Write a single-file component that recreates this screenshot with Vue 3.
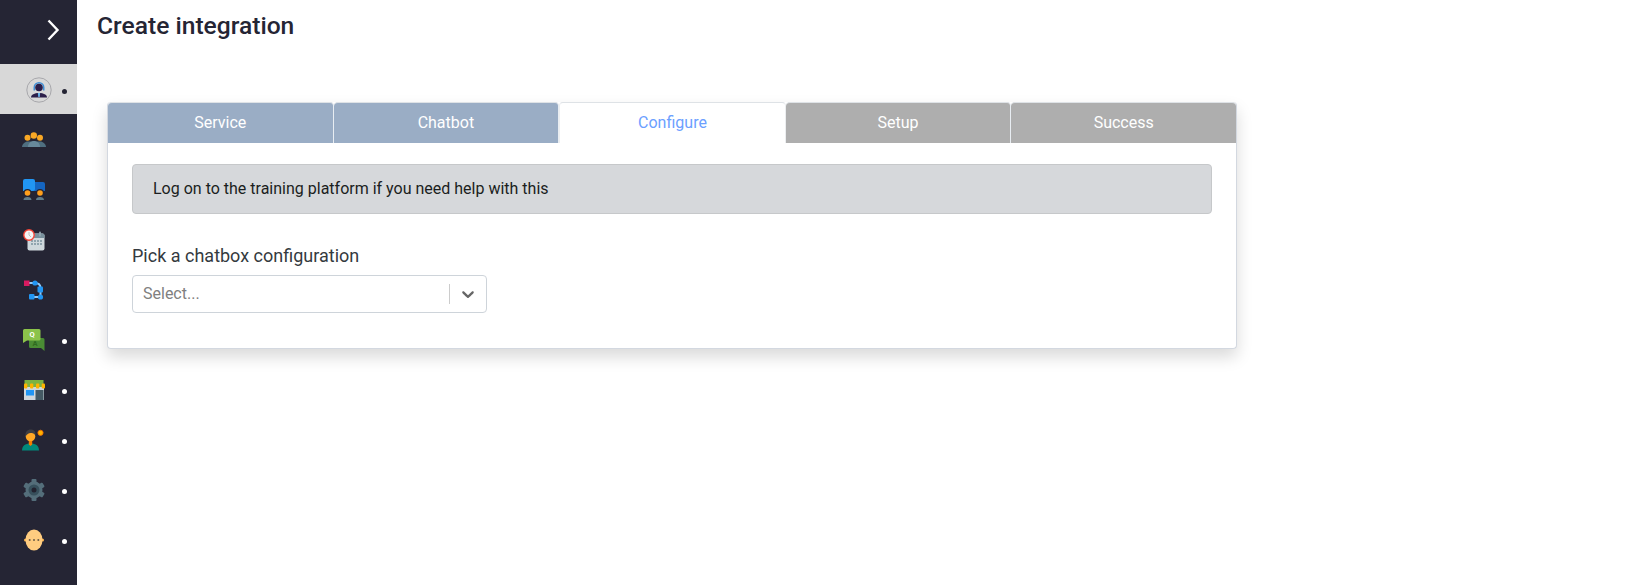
<script setup>
const tabs = [
  { label: 'Service', state: 'done' },
  { label: 'Chatbot', state: 'done' },
  { label: 'Configure', state: 'active' },
  { label: 'Setup', state: 'todo' },
  { label: 'Success', state: 'todo' }
]
const items = [
  { id: 'agent', dot: true, active: true },
  { id: 'team' },
  { id: 'folder' },
  { id: 'calendar' },
  { id: 'flow' },
  { id: 'qa', dot: true },
  { id: 'store', dot: true },
  { id: 'idea', dot: true },
  { id: 'gear', dot: true },
  { id: 'face', dot: true }
]
</script>

<template>
  <div class="page">
    <nav class="sidebar">
      <div class="toggle">
        <svg width="14" height="22" viewBox="0 0 14 22"><path d="M2.500 1.500 L11.500 11 L2.500 20.500" fill="none" stroke="#fff" stroke-width="2.400"/></svg>
      </div>
      <div v-for="item in items" :key="item.id" class="nav-item" :class="{ active: item.active }">
        <span class="nav-icon" :class="item.id">
          <svg v-if="item.id === 'agent'" width="26" height="26" viewBox="0 0 26 26">
            <circle cx="13" cy="13" r="12.200" fill="none" stroke="#9a9a9f" stroke-width=".8"/>
            <path d="M7.500 10.500a5.500 5.500 0 0 1 11 0v3h-1.500v-3a4 4 0 0 0-8 0v3h-1.500z" fill="#3f8fd6"/>
            <circle cx="13" cy="10.500" r="3.800" fill="#2c1f4a"/>
            <path d="M5 20.500c0-3 3.500-4.500 8-4.500s8 1.500 8 4.500z" fill="#2c1f4a"/>
            <path d="M11.800 16h2.400l-.5 4h-1.400z" fill="#6bb5ea"/>
          </svg>
          <svg v-else-if="item.id === 'team'" width="24" height="16" viewBox="0 0 24 16">
            <path d="M0 15c0-3 3-5.500 6-5.500h12c3 0 6 2.500 6 5.500z" fill="#4f6f80"/>
            <path d="M6 15c0-4 3-6 6-6s6 2 6 6z" fill="#67899b"/>
            <circle cx="5.500" cy="5.800" r="3" fill="#f9a825"/>
            <circle cx="18" cy="5.800" r="3" fill="#f9a825"/>
            <circle cx="11.800" cy="3.500" r="3.200" fill="#f9a825"/>
          </svg>
          <svg v-else-if="item.id === 'folder'" width="22" height="21" viewBox="0 0 22 21">
            <path d="M0 3h20a2 2 0 0 1 2 2v7H0z" fill="#1565c0"/>
            <path d="M2 0h8a2 2 0 0 1 2 2v8a2 2 0 0 1-2 2H0V2a2 2 0 0 1 2-2z" fill="#2196f3"/>
            <circle cx="4.500" cy="14" r="4" fill="#252534"/>
            <circle cx="17" cy="14" r="4" fill="#252534"/>
            <circle cx="4.500" cy="14" r="2.800" fill="#ff9f1c"/>
            <circle cx="17" cy="14" r="2.800" fill="#ff9f1c"/>
            <path d="M.500 21c0-2 1.500-3 4-3s4 1 4 3zM13 21c0-2 1.500-3 4-3s4 1 4 3z" fill="#607d8b"/>
          </svg>
          <svg v-else-if="item.id === 'calendar'" width="22" height="22" viewBox="0 0 22 22">
            <rect x="4.500" y="4.500" width="17" height="17" rx="2" fill="#cfd8dc"/>
            <path d="M4.500 6.500a2 2 0 0 1 2-2h13a2 2 0 0 1 2 2V9h-17z" fill="#78909c"/>
            <rect x="16" y="2.500" width="2" height="5" rx="1" fill="#90a4ae"/>
            <g fill="#90a4ae"><rect x="8" y="11" width="2" height="2"/><rect x="11" y="11" width="2" height="2"/><rect x="14" y="11" width="2" height="2"/><rect x="17" y="11" width="2" height="2"/><rect x="8" y="14" width="2" height="2"/><rect x="11" y="14" width="2" height="2"/><rect x="14" y="14" width="2" height="2"/><rect x="17" y="14" width="2" height="2"/></g>
            <circle cx="6" cy="6" r="5.200" fill="#f5f5f5" stroke="#f44336" stroke-width="1.400"/>
            <path d="M6 3v3l2 2" fill="none" stroke="#bbb" stroke-width=".9"/>
          </svg>
          <svg v-else-if="item.id === 'flow'" width="20" height="20" viewBox="0 0 20 20">
            <path d="M5 3h6c4 0 5.500 2 5.500 5v9H7" fill="none" stroke="#90caf9" stroke-width="2"/>
            <rect x="0" y=".5" width="5.500" height="5.500" fill="#d81b60"/>
            <circle cx="11" cy="3" r="2.600" fill="#2196f3"/>
            <rect x="13.500" y="6.500" width="5.500" height="6" rx="1" fill="#2196f3"/>
            <rect x="5" y="14" width="5.500" height="5.500" rx="1" fill="#2196f3"/>
            <circle cx="16.500" cy="17" r="2.600" fill="#2196f3"/>
          </svg>
          <svg v-else-if="item.id === 'qa'" width="22" height="22" viewBox="0 0 22 22">
            <path d="M6 9h14a1.500 1.500 0 0 1 1.500 1.500V22l-3.500-3H7.500A1.500 1.500 0 0 1 6 17.500z" fill="#4a8c34"/>
            <path d="M1.500 0h14.500a1.500 1.500 0 0 1 1.500 1.500V10a1.500 1.500 0 0 1-1.500 1.500H4L0 14V1.500A1.500 1.500 0 0 1 1.500 0z" fill="#8bc34a"/>
            <text x="9" y="8.200" class="qa-q">Q</text>
            <text x="12" y="16.500" class="qa-a">A</text>
          </svg>
          <svg v-else-if="item.id === 'store'" width="22" height="20" viewBox="0 0 22 20">
            <rect x="1" y="7" width="20" height="13" fill="#cfd8dc"/>
            <rect x="3" y="10" width="8" height="5.500" fill="#2196f3"/>
            <rect x="12.500" y="10" width="8" height="10" fill="#455a64"/>
            <rect x="1.500" y="0" width="19" height="7" fill="#7cb342"/>
            <g fill="#ffb300"><rect x="1" y="3.500" width="3.300" height="5" rx="1"/><rect x="7" y="3.500" width="3.300" height="5" rx="1"/><rect x="13" y="3.500" width="3.300" height="5" rx="1"/><rect x="18.700" y="3.500" width="3.300" height="5" rx="1"/></g>
          </svg>
          <svg v-else-if="item.id === 'idea'" width="24" height="22" viewBox="0 0 24 22">
            <circle cx="18.500" cy="3.800" r="2.600" fill="#ffb300" stroke="#ef6c00" stroke-width=".9"/>
            <path d="M0 21.500c0-4.500 3-7 8.500-7s8.500 2.500 8.500 7z" fill="#00897b"/>
            <path d="M6.800 12h3.400v3.500L8.500 17l-1.700-1.500z" fill="#f57c00"/>
            <circle cx="8.500" cy="7.500" r="4.800" fill="#ffa726"/>
            <path d="M3.500 7.500C3 2.500 5.500 .5 8.500 .5s5.500 1.500 5 6C12.500 4.500 10.500 4 8.500 4s-3.500 1.500-5 3.500z" fill="#3e3e42"/>
          </svg>
          <svg v-else-if="item.id === 'gear'" width="22" height="22" viewBox="0 0 22 22">
            <circle cx="11" cy="11" r="8.500" fill="#546e7a"/>
            <g fill="#546e7a"><rect x="8.500" y="0" width="5" height="22" rx="1"/><rect x="8.500" y="0" width="5" height="22" rx="1" transform="rotate(60 11 11)"/><rect x="8.500" y="0" width="5" height="22" rx="1" transform="rotate(120 11 11)"/></g>
            <circle cx="11" cy="11" r="5.500" fill="#37505c"/>
            <circle cx="11" cy="11" r="2.500" fill="#232330"/>
          </svg>
          <svg v-else-if="item.id === 'face'" width="20" height="22" viewBox="0 0 20 22">
            <circle cx="1.500" cy="11" r="1.500" fill="#ffb74d"/>
            <circle cx="18.500" cy="11" r="1.500" fill="#ffb74d"/>
            <ellipse cx="10" cy="11" rx="8.500" ry="10.500" fill="#ffcc80"/>
            <g fill="#6d5c45"><circle cx="5.700" cy="11" r="1"/><circle cx="10" cy="11" r="1"/><circle cx="14.300" cy="11" r="1"/></g>
          </svg>
        </span>
        <span v-if="item.dot" class="dot"></span>
      </div>
    </nav>

    <main class="main">
      <h1 class="title">Create integration</h1>
      <section class="card">
        <div class="tabs">
          <div v-for="tab in tabs" :key="tab.label" class="tab" :class="tab.state">{{ tab.label }}</div>
        </div>
        <div class="body">
          <div class="alert">Log on to the training platform if you need help with this</div>
          <label class="label">Pick a chatbox configuration</label>
          <div class="select">
            <span class="placeholder">Select...</span>
            <span class="sep"></span>
            <span class="chev">
              <svg width="20" height="20" viewBox="0 0 20 20"><path fill="#666" d="M4.516 7.548c.436-.446 1.043-.481 1.576 0L10 11.295l3.908-3.747c.533-.481 1.141-.446 1.574 0 .436.445.408 1.197 0 1.615-.406.418-4.695 4.502-4.695 4.502a1.095 1.095 0 0 1-1.576 0S4.924 9.581 4.516 9.163c-.409-.418-.436-1.170 0-1.615z"/></svg>
            </span>
          </div>
        </div>
      </section>
    </main>
  </div>
</template>

<style scoped>
.page {
  display: flex;
  height: 585px;
  font-family: Roboto, "Liberation Sans", sans-serif;
  background: #fff;
  overflow: hidden;
}
.sidebar {
  flex: 0 0 77px;
  background: #252534;
  display: flex;
  flex-direction: column;
}
.toggle {
  height: 64px;
  display: flex;
  align-items: center;
  padding-left: 46px;
  padding-bottom: 5px;
  box-sizing: border-box;
}
.nav-item {
  height: 50px;
  flex: none;
  display: flex;
  align-items: center;
  position: relative;
}
.nav-item.active { background: #d8d8d8; }
.nav-icon {
  width: 68px;
  padding-top: 1px;
  display: flex;
  justify-content: center;
  align-items: center;
}
.nav-icon.agent { padding-left: 9px; box-sizing: border-box; }
.dot {
  position: absolute;
  left: 62px;
  top: 25px;
  width: 5px;
  height: 5px;
  border-radius: 50%;
  background: #fff;
}
.active .dot { background: #252534; }
.qa-q { font: 700 7.500px Roboto, sans-serif; fill: #fff; text-anchor: middle; }
.qa-a { font: 700 7.500px Roboto, sans-serif; fill: #2e6b1f; text-anchor: middle; }
.main {
  flex: 1;
  padding-left: 20px;
  min-width: 0;
}
.title {
  margin: 0;
  height: 102px;
  box-sizing: border-box;
  padding-top: 11px;
  font-size: 24.600px;
  line-height: 29px;
  font-weight: 500;
  color: #252534;
}
.card {
  margin-left: 10px;
  width: 1130px;
  height: 247px;
  box-sizing: border-box;
  border-radius: 4px;
  border: 1px solid #d3d8e0;
  border-top: 0;
  background: #fff;
  box-shadow: 0 8px 16px rgba(0, 0, 0, 0.15);
}
.tabs {
  display: flex;
  height: 41px;
}
.tab {
  flex: 1;
  display: flex;
  align-items: center;
  justify-content: center;
  padding-bottom: 2px;
  color: #fff;
  font-size: 16px;
  box-sizing: border-box;
  border-radius: 4px 4px 0 0;
  border-right: 1px solid #e8edf2;
  border-top: 1px solid #dee2e6;
}
.tab:last-child { border-right: 0; }
.tab.done { background: #9aadc5; }
.tab.todo { background: #aeaeae; }
.tab.active {
  background: #fff;
  color: #6c9fff;
  border-right: 1px solid #eceef0;
  border-left: 1px solid #eceef0;
}
.body { padding: 21px 24px 0; }
.alert {
  height: 50px;
  box-sizing: border-box;
  display: flex;
  align-items: center;
  padding: 0 20px 1px;
  background: #d6d8db;
  border: 1px solid #c6c8ca;
  border-radius: 4px;
  font-size: 16px;
  color: #1b1e21;
}
.label {
  display: block;
  margin-top: 31px;
  height: 30px;
  font-size: 18px;
  line-height: 22px;
  color: #343a40;
}
.select {
  width: 355px;
  height: 38px;
  box-sizing: border-box;
  display: flex;
  align-items: center;
  border: 1px solid #ced4da;
  border-radius: 4px;
  background: #fff;
}
.placeholder {
  flex: 1;
  padding-left: 10px;
  padding-bottom: 1px;
  font-size: 16px;
  color: #808080;
}
.sep {
  width: 1px;
  height: 20px;
  background: #ccc;
}
.chev {
  width: 36px;
  display: flex;
  justify-content: center;
}
</style>
